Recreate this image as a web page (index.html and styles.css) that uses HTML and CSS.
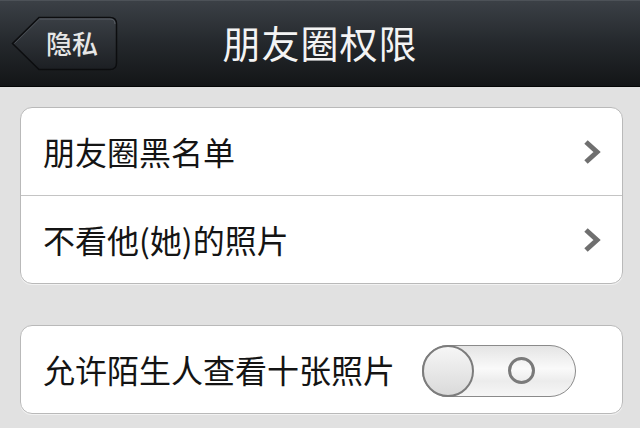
FILE: index.html
```html
<!DOCTYPE html>
<html lang="zh">
<head>
    <meta charset="UTF-8">
    <meta name="viewport" content="width=device-width, initial-scale=1.0">
    <title>朋友圈权限</title>
    <link rel="stylesheet" href="styles.css">
</head>
<body>
    <div class="nav-bar">
        <div class="nav-left">
            <a class="back-btn" href="#">
                <svg class="back-shape" width="107" height="55" viewBox="0 0 107 55">
                    <defs>
                        <linearGradient id="btnFill" x1="0" y1="0" x2="0" y2="1">
                            <stop offset="0" stop-color="#3a3f45"/>
                            <stop offset="1" stop-color="#1c1f23"/>
                        </linearGradient>
                    </defs>
                    <path d="M28 1.5 H99 Q105.5 1.5 105.5 8 V47 Q105.5 53.5 99 53.5 H28 L1.5 27.5 Z"
                          fill="url(#btnFill)" stroke="#0c0d0f" stroke-width="1.5"/>
                    <path d="M28.5 3 H99 Q104 3 104 8" fill="none" stroke="#5a5f66" stroke-width="1"/>
                    <path d="M3.5 27.5 L28.5 3" fill="none" stroke="#4a4f55" stroke-width="1"/>
                </svg>
                <span class="back-text">隐私</span>
            </a>
        </div>
        <h1 class="nav-title">朋友圈权限</h1>
        <div class="nav-right"></div>
    </div>

    <div class="content">
        <div class="group">
            <div class="cell">
                <span class="cell-label">朋友圈黑名单</span>
                <svg class="chevron" width="18" height="26" viewBox="0 0 18 26">
                    <path d="M3 3 L14 13 L3 23" fill="none" stroke="#6f6f6f" stroke-width="5"/>
                </svg>
            </div>
            <div class="cell">
                <span class="cell-label">不看他(她)的照片</span>
                <svg class="chevron" width="18" height="26" viewBox="0 0 18 26">
                    <path d="M3 3 L14 13 L3 23" fill="none" stroke="#6f6f6f" stroke-width="5"/>
                </svg>
            </div>
        </div>

        <div class="group">
            <div class="cell">
                <span class="cell-label">允许陌生人查看十张照片</span>
                <div class="switch">
                    <span class="switch-knob"></span>
                    <span class="switch-off"></span>
                </div>
            </div>
        </div>
    </div>
</body>
</html>
```

FILE: styles.css
```css
body {
    margin: 0;
    background: #e1e1e1;
    font-family: "Noto Sans CJK SC", "Noto Sans", sans-serif;
    width: 640px;
    height: 428px;
    overflow: hidden;
}
.nav-bar {
    display: grid;
    grid-template-columns: 1fr auto 1fr;
    align-items: center;
    background: linear-gradient(#3b4046, #24282c 50%, #131517);
    border-top: 1px solid #4d5258;
    border-bottom: 1px solid #050606;
    box-sizing: border-box;
    height: 87px;
}
.nav-left {
    padding-left: 11px;
}
.back-btn {
    display: grid;
    width: 107px;
    height: 55px;
    text-decoration: none;
}
.back-shape,
.back-text {
    grid-area: 1 / 1;
}
.back-text {
    align-self: center;
    justify-self: start;
    margin-left: 35px;
    margin-top: -2px;
    color: #e6e6e6;
    font-size: 26px;
    font-weight: 500;
}
.nav-title {
    margin: 0 0 4px 0;
    color: #f4f4f4;
    font-size: 38px;
    font-weight: normal;
    letter-spacing: 1px;
}
.content {
    padding: 20px 17px 0 20px;
}
.group {
    background: #fff;
    border: 1px solid #b9b9b9;
    border-radius: 12px;
    box-shadow: 0 1px 0 #f2f2f2;
}
.group + .group {
    margin-top: 41px;
}
.cell {
    height: 87px;
    display: flex;
    align-items: center;
    padding: 0 21px 0 22px;
}
.cell + .cell {
    border-top: 1px solid #c4c4c4;
}
.cell-label {
    flex: 1;
    color: #141414;
    font-size: 32px;
    margin-top: -2px;
}
.switch {
    width: 154px;
    height: 52px;
    box-sizing: border-box;
    border: 1.5px solid #8a8a8a;
    border-radius: 26px;
    background: linear-gradient(#e4e4e4, #fafafa 45%, #ececec 70%, #f6f6f6);
    display: flex;
    align-items: center;
    margin-right: 25px;
    margin-top: 2px;
}
.switch-knob {
    width: 52px;
    height: 52px;
    margin-left: -1.5px;
    box-sizing: border-box;
    border: 2px solid #7c7c7c;
    border-radius: 50%;
    background: linear-gradient(#f6f6f6, #dadada);
}
.switch-off {
    width: 27px;
    height: 27px;
    box-sizing: border-box;
    border: 3px solid #7a7a7a;
    border-radius: 50%;
    margin-left: 34px;
}
```
